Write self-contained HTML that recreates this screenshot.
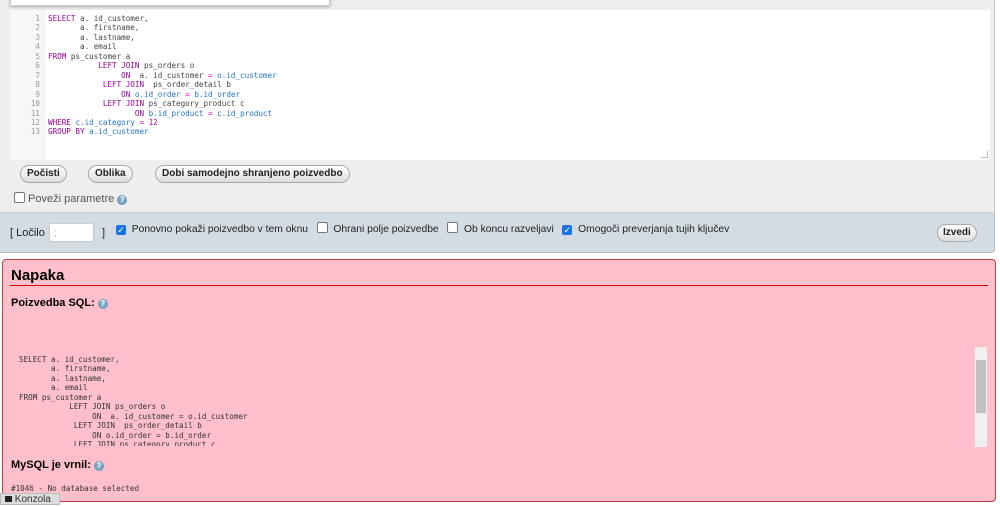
<!DOCTYPE html><html><head><style>
body{margin:0;width:1000px;height:505px;overflow:hidden;background:#fff;font-family:"Liberation Sans",sans-serif;font-size:11px;color:#222;position:relative}
.abs{position:absolute}
.top{left:0;top:0;width:994px;height:212px;background:#eee;border-right:1px solid #ccc;border-bottom:1px solid #ccc}
.ed{left:10px;top:10px;width:980px;height:150px;background:#fff}
.gut{left:0;top:0;width:34px;height:150px;background:#f7f7f7;border-right:1px solid #eee}
pre{margin:0;font-family:"DejaVu Sans Mono","Liberation Mono",monospace;font-size:7.6px;line-height:9.45px}
.ln{color:#999;text-align:right;width:30px;left:0;top:4px}
.code{left:38px;top:4px;color:#444}
.k{color:#909}.v{color:#27c}.o{color:#c0c}.n{color:#a0a}
.btn{border:1px solid #aaa;border-radius:10px;background:linear-gradient(#fff,#ddd);font-weight:bold;font-size:10px;height:16px;line-height:16px;padding:0 6px;box-sizing:content-box}
.cb{width:9px;height:9px;border:1px solid #777;border-radius:2px;background:#fff;display:inline-block;vertical-align:-1px}
.cbk{width:10px;height:10px;border-radius:2px;background:#1a73e8;display:inline-block;color:#fff;font-size:9px;line-height:10px;text-align:center;vertical-align:-1px}
.help{width:10px;height:10px;border-radius:50%;background:radial-gradient(#9bc,#58b);display:inline-block;color:#fff;font-size:8px;line-height:10px;text-align:center;font-weight:bold}
.bar{left:0;top:213px;width:994px;height:39px;background:#d3dce3;border-right:1px solid #bbb;border-bottom:1px solid #bbb;border-radius:0 0 4px 0}
.err{left:2px;top:259px;width:992px;height:241px;background:#ffc0cb;border:1px solid #c04048;border-radius:4px}
</style></head><body>
<div class="abs top"></div>
<div class="abs" style="left:10px;top:-4px;width:318px;height:8px;background:#fff;border:1px solid #ccc;box-shadow:0 1px 3px #aaa"></div>
<div class="abs ed"><div class="abs gut"></div>
<pre class="abs ln">1
2
3
4
5
6
7
8
9
10
11
12
13</pre>
<pre class="abs code"><span class="k">SELECT</span> a. id_customer,
       a. firstname,
       a. lastname,
       a. email
<span class="k">FROM</span> ps_customer a
           <span class="k">LEFT JOIN</span> ps_orders o
                <span class="k">ON</span>  a. id_customer <span class="o">=</span> <span class="v">o.id_customer</span>
            <span class="k">LEFT JOIN</span>  ps_order_detail b
                <span class="k">ON</span> <span class="v">o.id_order</span> <span class="o">=</span> <span class="v">b.id_order</span>
            <span class="k">LEFT JOIN</span> ps_category_product c
                   <span class="k">ON</span> <span class="v">b.id_product</span> <span class="o">=</span> <span class="v">c.id_product</span>
<span class="k">WHERE</span> <span class="v">c.id_category</span> <span class="o">=</span> <span class="n">12</span>
<span class="k">GROUP BY</span> <span class="v">a.id_customer</span></pre>
<div class="abs" style="right:2px;bottom:2px;width:6px;height:6px;border-right:1px solid #bbb;border-bottom:1px solid #bbb"></div>
</div>
<div class="abs btn" style="left:20px;top:165px">Počisti</div>
<div class="abs btn" style="left:88px;top:165px">Oblika</div>
<div class="abs btn" style="left:155px;top:165px">Dobi samodejno shranjeno poizvedbo</div>
<div class="abs" style="left:14px;top:192px;color:#555;font-size:11px"><span class="cb"></span> Poveži parametre <span class="help">?</span></div>
<div class="abs bar"></div>
<div class="abs" style="left:10px;top:227px">[ Ločilo</div>
<div class="abs" style="left:49px;top:223px;width:45px;height:19px;background:#fff;border:1px solid #ccc;border-radius:2px;color:#aaa;font-size:10px;line-height:19px;padding-left:4px;box-sizing:border-box">;</div>
<div class="abs" style="left:102px;top:227px">]</div>
<div class="abs" style="left:116px;top:222px;white-space:nowrap;font-size:10.3px"><span class="cbk">✓</span>&nbsp; Ponovno pokaži poizvedbo v tem oknu &nbsp;&nbsp;<span class="cb"></span>&nbsp; Ohrani polje poizvedbe &nbsp;&nbsp;<span class="cb"></span>&nbsp; Ob koncu razveljavi &nbsp;&nbsp;<span class="cbk">✓</span>&nbsp; Omogoči preverjanja tujih ključev</div>
<div class="abs btn" style="left:937px;top:224px;padding:0 5px">Izvedi</div>
<div class="abs err"></div>
<div class="abs" style="left:11px;top:267px;font-size:15px;font-weight:bold;color:#000">Napaka</div>
<div class="abs" style="left:10px;top:285px;width:978px;height:1px;background:#c00"></div>
<div class="abs" style="left:11px;top:297px;font-weight:bold;color:#000">Poizvedba SQL: <span class="help">?</span></div>
<pre class="abs" style="left:19px;top:355px;color:#333;height:91px;overflow:hidden">SELECT a. id_customer,
       a. firstname,
       a. lastname,
       a. email
FROM ps_customer a
           LEFT JOIN ps_orders o
                ON  a. id_customer = o.id_customer
            LEFT JOIN  ps_order_detail b
                ON o.id_order = b.id_order
            LEFT JOIN ps_category_product c</pre>
<div class="abs" style="left:975px;top:347px;width:12px;height:100px;background:#f0f0f0"></div>
<div class="abs" style="left:976px;top:360px;width:10px;height:53px;background:#c1c1c1"></div>
<div class="abs" style="left:11px;top:459px;font-weight:bold;color:#000">MySQL je vrnil: <span class="help">?</span></div>
<pre class="abs" style="left:11px;top:484px;color:#333">#1046 - No database selected</pre>
<div class="abs" style="left:0;top:493px;width:60px;height:12px;background:#ddd;border:1px solid #bbb;font-size:10px;line-height:12px;color:#333;padding-left:4px;box-sizing:border-box"><span style="display:inline-block;width:7px;height:6px;background:#222"></span> Konzola</div>
</body></html>
